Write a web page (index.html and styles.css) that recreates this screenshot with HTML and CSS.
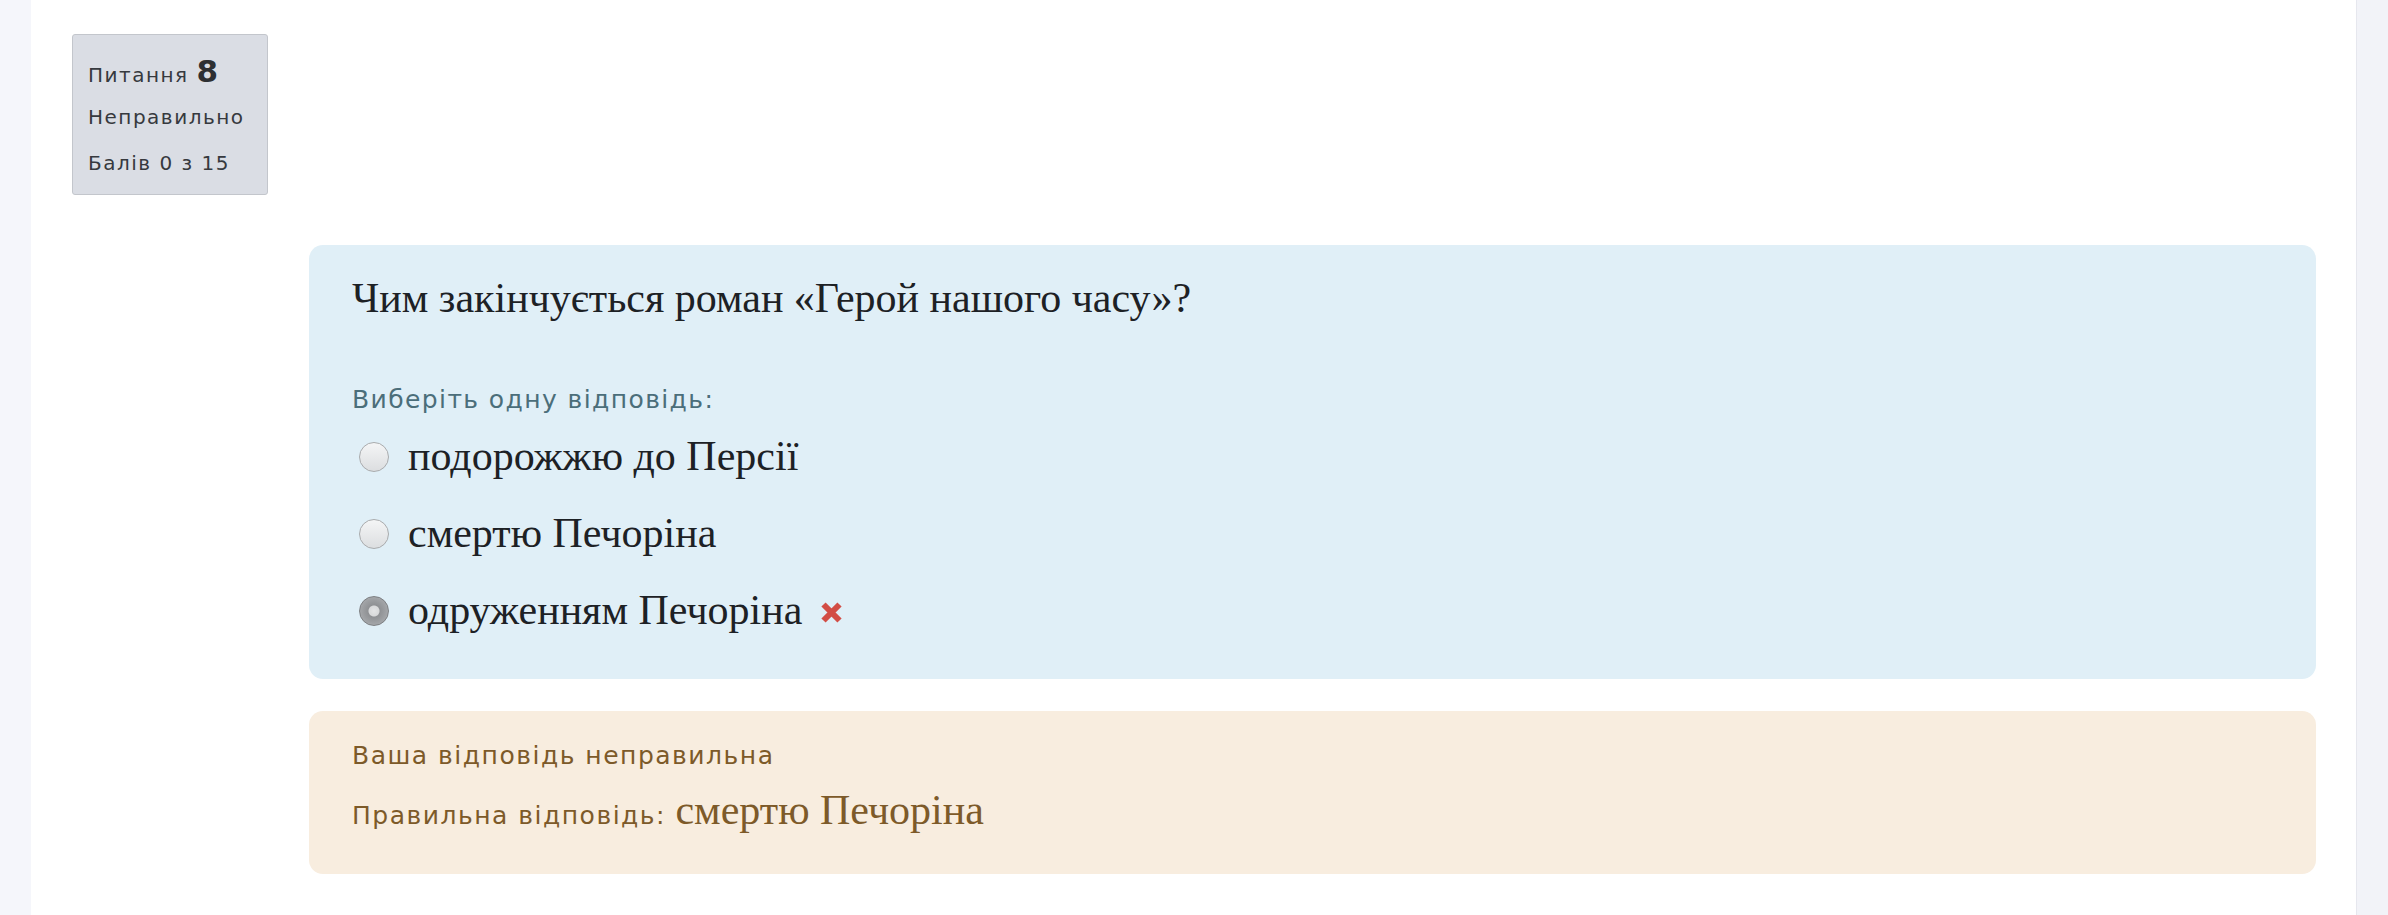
FILE: index.html
```html
<!DOCTYPE html>
<html lang="uk">
  <head>
    <meta charset="UTF-8" />
    <title>Питання 8</title>
    <link rel="stylesheet" href="styles.css">
  </head>
  <body>
    <div class="page">
      <div class="main">
        <div class="que">
          <div class="info">
            <h3 class="no">Питання <span class="qno">8</span></h3>
            <div class="state">Неправильно</div>
            <div class="grade">Балів 0 з 15</div>
          </div>
          <div class="content">
            <div class="formulation">
              <div class="qtext">Чим закінчується роман «Герой нашого часу»?</div>
              <div class="prompt">Виберіть одну відповідь:</div>
              <div class="answer">
                <div class="option">
                  <span class="radio"></span>
                  <span class="label">подорожжю до Персії</span>
                </div>
                <div class="option">
                  <span class="radio"></span>
                  <span class="label">смертю Печоріна</span>
                </div>
                <div class="option">
                  <span class="radio checked"></span>
                  <span class="label">одруженням Печоріна</span>
                  <svg class="wrong-icon" width="23" height="23" viewBox="0 0 23 23">
                    <path d="M3.5 3.5 L19.5 19.5 M19.5 3.5 L3.5 19.5" stroke="#d24d45" stroke-width="6" />
                  </svg>
                </div>
              </div>
            </div>
            <div class="outcome">
              <div class="specificfeedback">Ваша відповідь неправильна</div>
              <div class="rightanswer">Правильна відповідь: <span class="serif">смертю Печоріна</span></div>
            </div>
          </div>
        </div>
      </div>
      <div class="scrollbar"></div>
    </div>
  </body>
</html>
```

FILE: styles.css
```css
* {
  box-sizing: border-box;
}

body {
  margin: 0;
  background: #f5f6fb;
  font-family: "DejaVu Sans", sans-serif;
  color: #34373c;
}

.page {
  display: flex;
  height: 915px;
  overflow: hidden;
}

.main {
  margin-left: 31px;
  width: 2325px;
  background: #ffffff;
  padding: 34px 40px 0 41px;
}

.scrollbar {
  flex: 1;
  background: #f2f3f8;
  border-left: 1px solid #e6e7ee;
}

/* question info block */
.info {
  width: 196px;
  height: 161px;
  padding: 13px 15px 0;
  background: #dadde4;
  border: 1px solid #c3c6cc;
  border-radius: 3px;
  font-size: 20px;
  letter-spacing: 1.5px;
  color: #36393e;
}

.no {
  margin: 0;
  font-size: 20px;
  font-weight: normal;
  line-height: 46px;
  height: 46px;
}

.qno {
  font-size: 31px;
  font-weight: bold;
  letter-spacing: 0;
  color: #2e3033;
}

.state,
.grade {
  line-height: 46px;
}

.content {
  margin-left: 237px;
  margin-top: 50px;
}

/* question body */
.formulation {
  background: #e0eff7;
  border-radius: 14px;
  padding: 28px 43px 30px;
  height: 434px;
  color: #1d2125;
}

.qtext {
  font-family: "Liberation Serif", serif;
  font-size: 42px;
  line-height: 50px;
}

.prompt {
  margin-top: 59px;
  font-size: 25px;
  letter-spacing: 1.4px;
  line-height: 36px;
  color: #4b6e7a;
}

.option {
  display: flex;
  align-items: center;
  height: 77px;
  padding-left: 7px;
}

.radio {
  width: 30px;
  height: 30px;
  border-radius: 50%;
  border: 1px solid #a9abad;
  background: linear-gradient(#f4f5f6, #dcdee0);
  margin-right: 19px;
  flex-shrink: 0;
}

.radio.checked {
  border-color: #7d7f82;
  background: radial-gradient(circle, #e4e5e6 0, #d8d9da 5px, #8f9194 6px, #a4a6a9 14px);
}

.label {
  font-family: "Liberation Serif", serif;
  font-size: 42px;
  line-height: 77px;
}

.wrong-icon {
  margin-left: 18px;
  margin-top: 4px;
}

/* feedback */
.outcome {
  margin-top: 32px;
  background: #f8eddf;
  border-radius: 14px;
  height: 163px;
  padding: 27px 43px 0;
  color: #7d5a29;
  font-size: 25px;
  letter-spacing: 1.5px;
  line-height: 36px;
}

.rightanswer {
  margin-top: 18px;
}

.serif {
  font-family: "Liberation Serif", serif;
  font-size: 42px;
  letter-spacing: 0;
}
```
